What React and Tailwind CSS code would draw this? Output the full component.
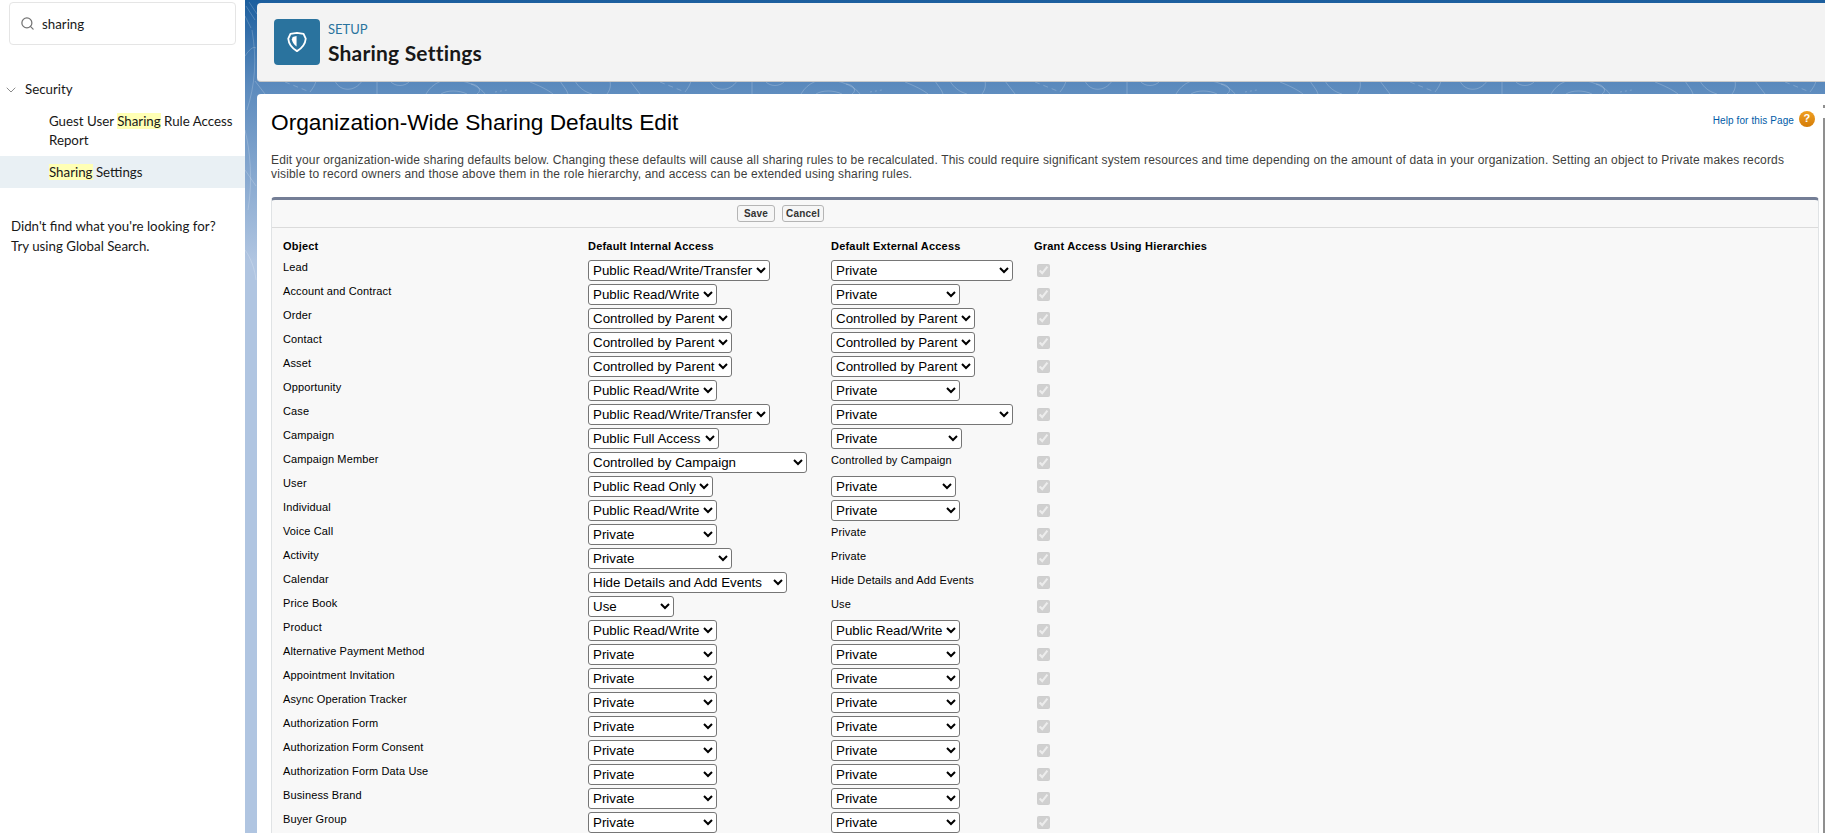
import React from "react";
import { Search, ChevronDown } from "lucide-react";

const W = { a: "w-[182px]", b: "w-[129px]", c: "w-[144px]", d: "w-[131px]", e: "w-[219px]", f: "w-[125px]", g: "w-[199px]", h: "w-[86px]" };
const P = "Public Read/Write";
const T = "Public Read/Write/Transfer";
const C = "Controlled by Parent";
const rows = [
  ["Lead", [T, W.a], ["Private", W.a]],
  ["Account and Contract", [P, W.b], ["Private", W.b]],
  ["Order", [C, W.c], [C, W.c]],
  ["Contact", [C, W.c], [C, W.c]],
  ["Asset", [C, W.c], [C, W.c]],
  ["Opportunity", [P, W.b], ["Private", W.b]],
  ["Case", [T, W.a], ["Private", W.a]],
  ["Campaign", ["Public Full Access", W.d], ["Private", W.d]],
  ["Campaign Member", ["Controlled by Campaign", W.e], "Controlled by Campaign"],
  ["User", ["Public Read Only", W.f], ["Private", W.f]],
  ["Individual", [P, W.b], ["Private", W.b]],
  ["Voice Call", ["Private", W.b], "Private"],
  ["Activity", ["Private", W.c], "Private"],
  ["Calendar", ["Hide Details and Add Events", W.g], "Hide Details and Add Events"],
  ["Price Book", ["Use", W.h], "Use"],
  ["Product", [P, W.b], [P, W.b]],
  ["Alternative Payment Method", ["Private", W.b], ["Private", W.b]],
  ["Appointment Invitation", ["Private", W.b], ["Private", W.b]],
  ["Async Operation Tracker", ["Private", W.b], ["Private", W.b]],
  ["Authorization Form", ["Private", W.b], ["Private", W.b]],
  ["Authorization Form Consent", ["Private", W.b], ["Private", W.b]],
  ["Authorization Form Data Use", ["Private", W.b], ["Private", W.b]],
  ["Business Brand", ["Private", W.b], ["Private", W.b]],
  ["Buyer Group", ["Private", W.b], ["Private", W.b]],
];

function Access({ v }) {
  if (typeof v === "string") return <span className="block pt-[1px] text-[11px] leading-[14px] tracking-[0.13px] text-black">{v}</span>;
  return (
    <select defaultValue={v[0]} className={`${v[1]} block h-[21px] rounded-[3px] border border-[#767676] bg-white text-[13.33px] leading-none tracking-normal text-black`}>
      <option>{v[0]}</option>
    </select>
  );
}

function Mark({ children }) {
  return <span className="bg-[#ffffb5]">{children}</span>;
}

function Swirls() {
  return (
    <svg className="absolute inset-0 h-full w-full" fill="none" stroke="#ffffff" strokeOpacity="0.2" strokeWidth="1">
      <defs>
        <pattern id="strip" x="0" y="0" width="375" height="100" patternUnits="userSpaceOnUse">
          <path d="M10 81 L20 94" />
          <path d="M40 82 L65 92" strokeDasharray="5 4" />
          <path d="M65 92 C68 88 70 85 71 81" />
          <path d="M90 81 C95 92 110 92 117 81" />
          <path d="M132 82 V94" />
          <path d="M145 81 C150 87 160 87 165 81" />
          <path d="M181 94 C188 82 200 78 212 80 C225 82 236 88 240 94" />
          <path d="M196 94 C202 90 214 90 222 94" />
          <path d="M226 84 C232 84 238 90 232 94" />
          <path d="M250 92 L262 90" strokeDasharray="2 3" />
          <path d="M285 82 C295 86 303 90 308 94" />
          <path d="M315 81 C318 86 322 90 323 94" />
          <path d="M330 81 C334 88 340 92 347 94" />
          <path d="M365 81 C366 86 365 90 362 94" />
        </pattern>
      </defs>
      <rect x="0" y="81" width="100%" height="13" fill="url(#strip)" stroke="none" />
      <path d="M1 6 L10 20 M4 2 L12 14 M0 16 L6 28 M7 30 C12 60 10 85 2 110 M0 56 C4 50 8 46 11 48 M0 130 C5 150 8 180 3 210 M0 170 L11 186 M0 250 C6 258 10 270 11 280" />
    </svg>
  );
}

export default function App() {
  return (
    <div className="flex h-[833px] w-full overflow-hidden bg-white font-['Lato',sans-serif]">
      <aside className="w-[245px] shrink-0 bg-white text-[13.3px] text-[#181818]">
        <div className="px-[9px] pt-[2px]">
          <div className="flex h-[43px] items-center rounded-[4px] border border-[#e5e5e5] pl-[10px]">
            <Search size={15} className="text-[#747474]" />
            <span className="ml-[7px] mt-[2px]">sharing</span>
          </div>
        </div>
        <div className="mt-[33px] flex h-[24px] items-center pl-[3px]">
          <ChevronDown size={16} strokeWidth={1.25} className="text-[#747474]" />
          <span className="ml-[6px]">Security</span>
        </div>
        <div className="mt-[10px] pl-[49px] pr-[8px] leading-[19px]">
          Guest User <Mark>Sharing</Mark> Rule Access Report
        </div>
        <div className="mt-[6px] flex h-[32px] items-center bg-[#e9f0f4] pl-[49px]">
          <span className="mt-[1px]"><Mark>Sharing</Mark> Settings</span>
        </div>
        <div className="mt-[28px] pl-[11px] leading-[20px]">
          <p>Didn't find what you're looking for?</p>
          <p>Try using Global Search.</p>
        </div>
      </aside>

      <main className="relative flex min-w-0 flex-1 flex-col bg-[linear-gradient(180deg,#1b5e9e_0px,#5b8abd_85px,#b0c5e1_260px,#b0c5e1_100%)] pl-[12px]">
        <Swirls />
        <header className="relative mt-[3px] flex h-[79px] shrink-0 items-center rounded-l-[4px] border-b border-[#c9c9c9] bg-[#f3f3f3] pl-[17px]">
          <div className="flex h-[46px] w-[46px] items-center justify-center rounded-[4px] bg-[#2a739e]">
            <svg width="24" height="24" viewBox="0 0 22 22" fill="none">
              <path d="M11 2.6 L17 3.6 L19 8 C18.6 12.6 15.6 16.6 11 19.4 C6.4 16.6 3.4 12.6 3 8 L5 3.6 Z" stroke="#fff" strokeWidth="1.7" strokeLinejoin="round" />
              <path d="M10.6 5.6 L7 6.4 L6.2 8.6 C6.6 10.8 8.2 13.4 10.6 15.2 Z" fill="#fff" />
            </svg>
          </div>
          <div className="ml-[8px] pt-[1px]">
            <div className="text-[13px] leading-[16px] text-[#2a739e]">SETUP</div>
            <div className="mt-[4px] text-[21px] font-bold leading-[24px] tracking-[0.2px] text-[#181818]">Sharing Settings</div>
          </div>
        </header>

        <section className="relative mt-[12px] flex-1 rounded-tl-[4px] bg-white pl-[14px] pr-[6px] font-['Liberation_Sans',Arial,sans-serif]">
          <div className="flex h-[55px] items-start justify-between pt-[14px]">
            <h1 className="text-[22.7px] leading-[28px] text-black">Organization-Wide Sharing Defaults Edit</h1>
            <div className="mr-[4px] mt-[1px] flex items-center gap-[5px] text-[10px] tracking-[0.1px] text-[#015ba7]">
              <span className="pt-[4px]">Help for this Page</span>
              <span className="flex h-[16px] w-[16px] items-center justify-center rounded-full bg-gradient-to-b from-[#f0a020] to-[#d47c06] text-[11px] font-bold leading-none text-white">?</span>
            </div>
          </div>
          <p className="mt-[4px] w-[1540px] text-[12px] leading-[14px] tracking-[0.16px] text-[#3e3e3c]">
            Edit your organization-wide sharing defaults below. Changing these defaults will cause all sharing rules to be recalculated. This could require significant system resources and time depending on the amount of data in your organization. Setting an object to Private makes records visible to record owners and those above them in the role hierarchy, and access can be extended using sharing rules.
          </p>
          <div className="mt-[16px] rounded-t-[4px] border-x border-t-[3px] border-x-[#e0e3e5] border-t-[#747e96] bg-[#f8f8f8] pb-[40px]">
            <div className="flex h-[28px] items-center gap-[7px] border-b border-[#dbdbdb] pl-[465px]">
              <button className="h-[17px] w-[38px] rounded-[3px] border border-[#b5b5b5] bg-[#f6f6f6] text-[10px] font-bold leading-none tracking-[0.2px] text-[#333]">Save</button>
              <button className="h-[17px] w-[42px] rounded-[3px] border border-[#b5b5b5] bg-[#f6f6f6] text-[10px] font-bold leading-none tracking-[0.2px] text-[#333]">Cancel</button>
            </div>
            <div className="pl-[11px] pt-[10px]">
              <div className="mb-[1px] flex h-[17px] items-center text-[11px] font-bold tracking-[0.2px] text-black">
                <div className="w-[305px]">Object</div>
                <div className="w-[243px]">Default Internal Access</div>
                <div className="w-[203px]">Default External Access</div>
                <div>Grant Access Using Hierarchies</div>
              </div>
              {rows.map((r) => (
                <div key={r[0]} className="flex h-[24px] pt-[4px] text-[11px] tracking-[0.13px] text-black">
                  <div className="w-[305px] leading-[14px]">{r[0]}</div>
                  <div className="w-[243px]"><Access v={r[1]} /></div>
                  <div className="w-[203px]"><Access v={r[2]} /></div>
                  <div className="pl-[3px] pt-[4px]"><input type="checkbox" checked disabled readOnly className="block h-[13px] w-[13px]" /></div>
                </div>
              ))}
            </div>
          </div>
          <div className="absolute right-0 top-[11px] h-[3px] w-[2px] bg-[#8f8f8f]" />
          <div className="absolute right-0 top-[24px] h-[760px] w-[2px] bg-[#8f8f8f]" />
        </section>
      </main>
    </div>
  );
}
